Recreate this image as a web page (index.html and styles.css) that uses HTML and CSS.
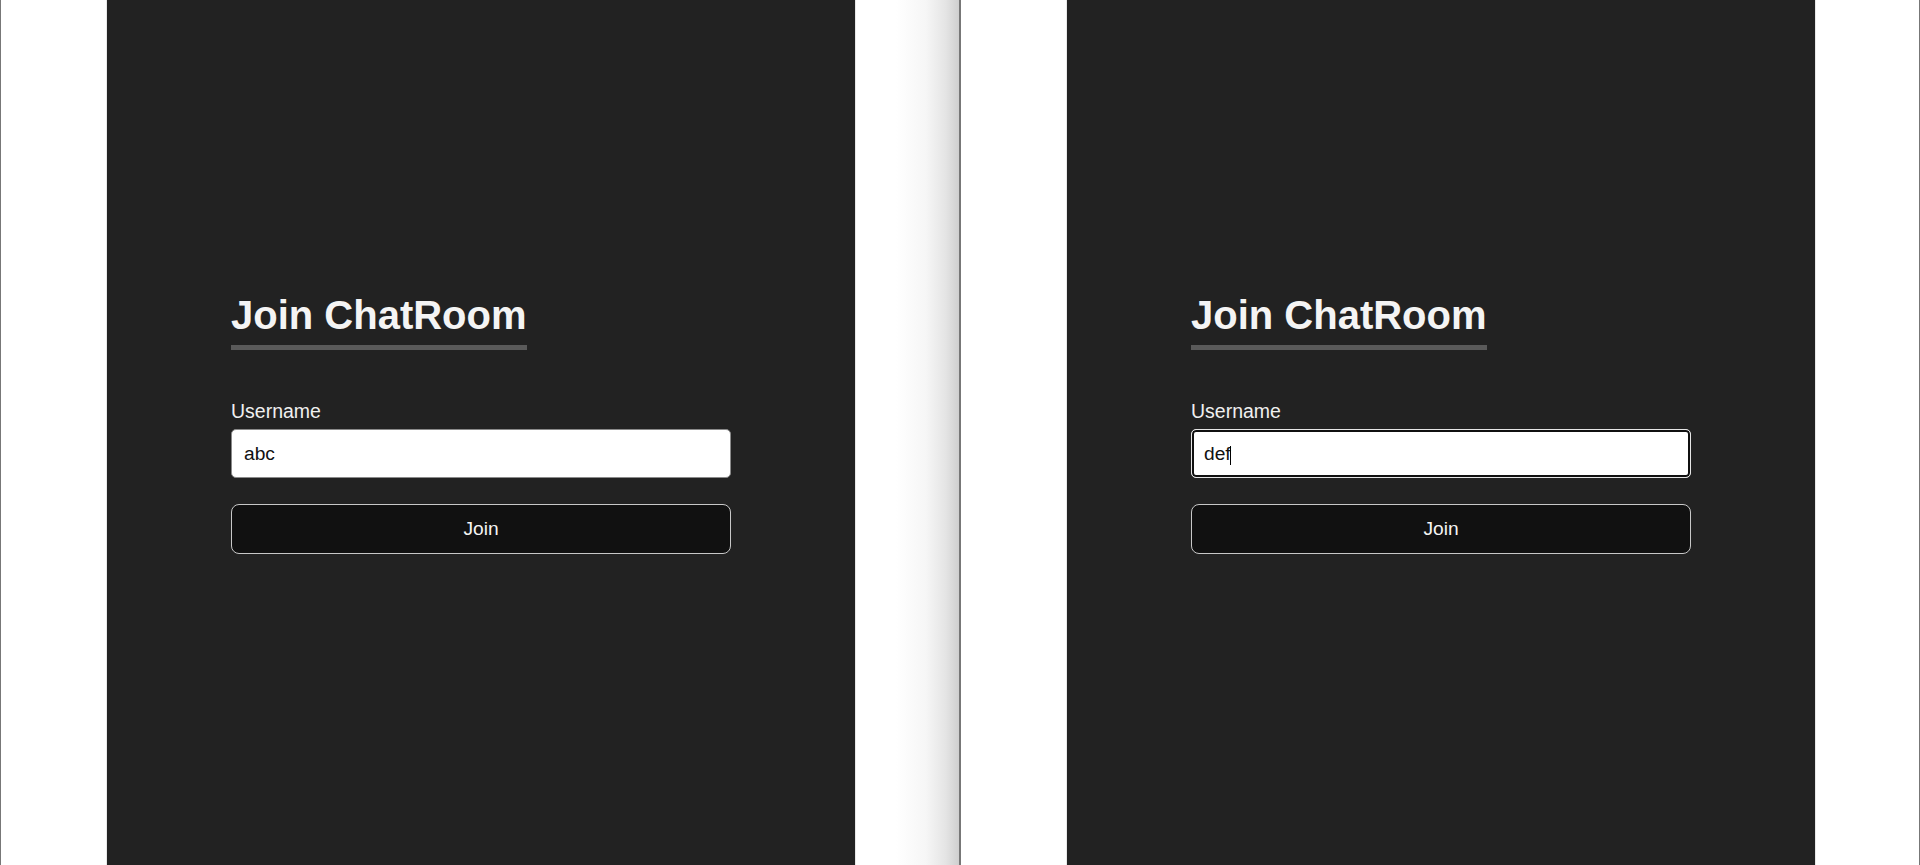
FILE: index.html
```html
<!DOCTYPE html>
<html lang="en">
<head>
<meta charset="utf-8">
<title>Join ChatRoom</title>
<link rel="stylesheet" href="styles.css">
</head>
<body>
<div class="screens">
  <section class="pane pane-left">
    <div class="panel">
      <form class="join-form">
        <h1 class="title">Join ChatRoom</h1>
        <label class="label" for="u1">Username</label>
        <div class="field">
          <input class="input" id="u1" type="text" value="abc">
        </div>
        <button class="btn" type="button">Join</button>
      </form>
    </div>
  </section>
  <section class="pane pane-right">
    <div class="panel">
      <form class="join-form">
        <h1 class="title">Join ChatRoom</h1>
        <label class="label" for="u2">Username</label>
        <div class="field">
          <input class="input input-focus" id="u2" type="text" value="def">
          <span class="caret"></span>
        </div>
        <button class="btn" type="button">Join</button>
      </form>
    </div>
  </section>
</div>
</body>
</html>
```

FILE: styles.css
```css
* { box-sizing: border-box; }
html, body { margin: 0; padding: 0; }
body {
  font-family: "Liberation Sans", Arial, sans-serif;
  background: #fff;
  overflow: hidden;
}
.screens {
  display: flex;
  height: 865px;
  width: 1920px;
}
.pane {
  display: flex;
  justify-content: center;
  height: 865px;
}
.pane-left {
  width: 959px;
  border-left: 1px solid #777;
  padding-left: 2px;
  background: linear-gradient(to right, #fff 0, #fff 895px, #f6f6f6 925px, #e4e4e4 945px, #cfcfcf 100%);
}
.pane-right {
  width: 961px;
  border-left: 2px solid #777;
  border-right: 1px solid #777;
  padding-left: 2px;
  background: #fff;
}
.panel {
  width: 750px;
  height: 865px;
  background: #222;
  border-left: 1px solid #e8e8e8;
  border-right: 1px solid #e8e8e8;
  display: flex;
  justify-content: center;
}
.join-form {
  width: 500px;
  padding-top: 293px;
  display: flex;
  flex-direction: column;
  align-items: flex-start;
}
.title {
  margin: 0;
  font-size: 40px;
  line-height: 45px;
  font-weight: bold;
  color: #f4f4f4;
  padding-bottom: 7px;
  border-bottom: 5px solid #5a5a5a;
}
.label {
  margin-top: 50px;
  font-size: 19.5px;
  line-height: 22px;
  color: #f0f0f0;
  margin-bottom: 7px;
}
.field {
  position: relative;
  width: 500px;
}
.input {
  display: block;
  width: 500px;
  height: 49px;
  padding: 0 12px;
  font-family: "Liberation Sans", Arial, sans-serif;
  font-size: 19.2px;
  color: #111;
  background: #fff;
  border: 1px solid #8a8a8a;
  border-radius: 5px;
  outline: none;
}
.input-focus {
  border-color: #e6e6e6;
  box-shadow: inset 0 0 0 2px #101010;
}
.caret {
  position: absolute;
  left: 39px;
  top: 17px;
  width: 1px;
  height: 19px;
  background: #000;
}
.btn {
  margin-top: 26px;
  width: 500px;
  height: 50px;
  background: #111;
  color: #f4f4f4;
  border: 1px solid #c8c8c8;
  border-radius: 8px;
  font-family: "Liberation Sans", Arial, sans-serif;
  font-size: 19.2px;
  cursor: pointer;
}
```
